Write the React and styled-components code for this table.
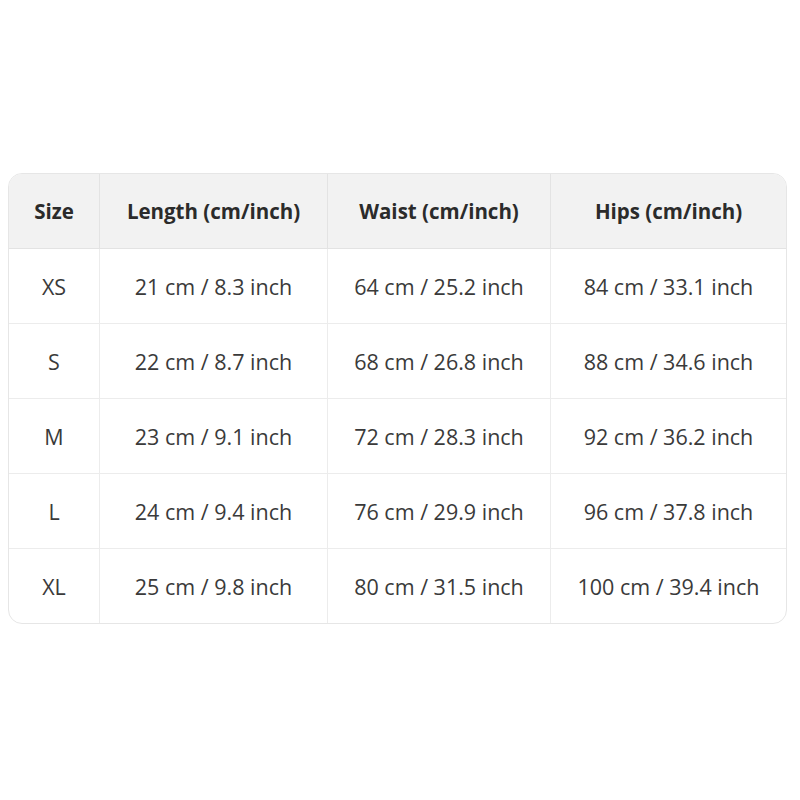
import React from "react";
import styled, { createGlobalStyle } from "styled-components";

const Global = createGlobalStyle`
  html, body { margin: 0; padding: 0; background: #fff; }
  body { font-family: "Open Sans", "Noto Sans", sans-serif; color: #333; }
`;

const Page = styled.div`
  padding: 173px 14px 0 8px;
`;

const Table = styled.table`
  width: 778px;
  border-collapse: separate;
  border-spacing: 0;
  border: 1px solid #e6e6e6;
  border-radius: 14px;
  overflow: hidden;
  table-layout: fixed;
`;

const Th = styled.th`
  background: #f2f2f2;
  font-weight: 700;
  font-size: 20.5px;
  color: #2b2b2b;
  height: 74px;
  padding: 0;
  text-align: center;
  border-left: ${(p) => (p.$first ? "none" : "1px solid #e3e3e3")};
  border-bottom: 1px solid #e3e3e3;
`;

const Td = styled.td`
  font-size: 21.5px;
  color: #3a3a3a;
  height: 74px;
  padding: 0;
  text-align: center;
  border-left: ${(p) => (p.$first ? "none" : "1px solid #ececec")};
  border-top: ${(p) => (p.$topRow ? "none" : "1px solid #ececec")};
`;

const cols = [90, 228, 223, 236];
const head = ["Size", "Length (cm/inch)", "Waist (cm/inch)", "Hips (cm/inch)"];
const rows = [
  ["XS", "21 cm / 8.3 inch", "64 cm / 25.2 inch", "84 cm / 33.1 inch"],
  ["S", "22 cm / 8.7 inch", "68 cm / 26.8 inch", "88 cm / 34.6 inch"],
  ["M", "23 cm / 9.1 inch", "72 cm / 28.3 inch", "92 cm / 36.2 inch"],
  ["L", "24 cm / 9.4 inch", "76 cm / 29.9 inch", "96 cm / 37.8 inch"],
  ["XL", "25 cm / 9.8 inch", "80 cm / 31.5 inch", "100 cm / 39.4 inch"],
];

export default function App() {
  return (
    <Page>
      <Global />
      <Table>
        <colgroup>
          {cols.map((w, i) => (
            <col key={i} style={{ width: w }} />
          ))}
        </colgroup>
        <thead>
          <tr>
            {head.map((h, i) => (
              <Th key={h} $first={i === 0}>{h}</Th>
            ))}
          </tr>
        </thead>
        <tbody>
          {rows.map((r, ri) => (
            <tr key={r[0]}>
              {r.map((c, ci) => (
                <Td key={ci} $first={ci === 0} $topRow={ri === 0}>{c}</Td>
              ))}
            </tr>
          ))}
        </tbody>
      </Table>
    </Page>
  );
}
